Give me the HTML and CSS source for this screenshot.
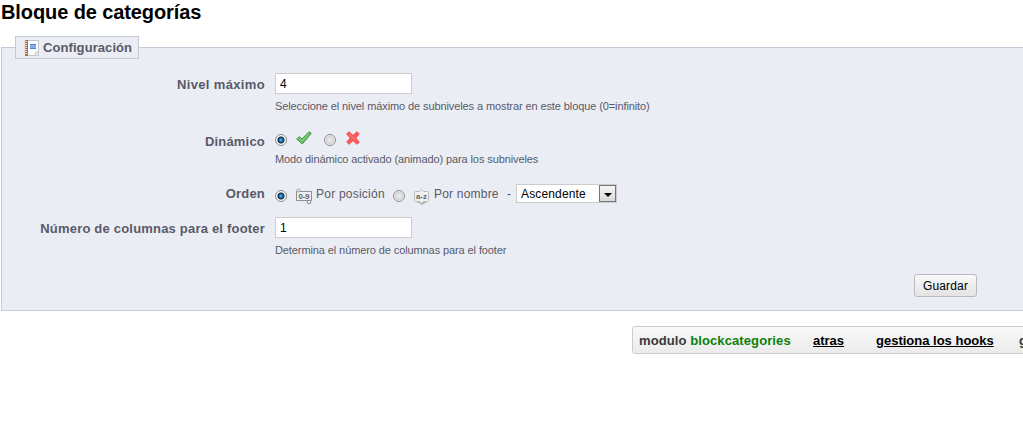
FILE: index.html
```
<!DOCTYPE html>
<html lang="es">
<head>
    <meta charset="UTF-8">
    <title>Bloque de categorías</title>
    <link rel="stylesheet" href="styles.css">
</head>
<body>
    <h2>Bloque de categorías</h2>
    <form onsubmit="return false">
        <div class="panel">
            <div class="legend">
                <svg width="16" height="16" viewBox="0 0 16 16">
                    <path d="M2.5 .5h12v11l-4 4h-8z" fill="#fbfcfd" stroke="#c3c7ce"/>
                    <path d="M10.5 15.5l1-3 3-1v4z" fill="#eceef2" stroke="#c3c7ce"/>
                    <path d="M1 0h3v16H1z" fill="#b96c3c"/>
                    <path d="M0 1.5h3M0 3.5h3M0 5.5h3M0 7.5h3M0 9.5h3M0 11.5h3M0 13.5h3" stroke="#e3d5cb"/>
                    <path d="M6 4h6v1H6zM6 8h6v1H6z" fill="#4b86d6"/>
                    <path d="M6 5h6v3H6z" fill="#83b0ec"/>
                </svg>
                <span>Configuración</span>
            </div>
            <div class="row row-level">
                <label for="level">Nivel máximo</label>
                <div class="field">
                    <input type="text" id="level" value="4">
                    <p class="hint">Seleccione el nivel máximo de subniveles a mostrar en este bloque (0=infinito)</p>
                </div>
            </div>
            <div class="row row-dynamic">
                <label>Dinámico</label>
                <div class="field">
                    <div class="options">
                        <input type="radio" name="dynamic" checked>
                        <svg class="yes" width="16" height="14" viewBox="0 0 16 14">
                            <path d="M.7 8l2.6-2.4L6 8 13 .7l2.3 1.6L6.3 13z" fill="#66c05f" stroke="#459a49" stroke-linejoin="round"/>
                            <path d="M2.7 7.5L6 10l7.3-7.8" fill="none" stroke="#8dd486"/>
                        </svg>
                        <input type="radio" name="dynamic">
                        <svg class="no" width="14" height="14" viewBox="0 0 14 14">
                            <path d="M3 .7l4 3.7L11 .7 13.3 3 9.7 7l3.6 4-2.3 2.3-4-3.7-4 3.7L.7 11l3.6-4L.7 3z" fill="#fb5a5a" stroke="#ec4a4c" stroke-linejoin="round"/>
                            <path d="M3 2.5l8 8" stroke="#ff8080"/>
                        </svg>
                    </div>
                    <p class="hint">Modo dinámico activado (animado) para los subniveles</p>
                </div>
            </div>
            <div class="row row-order">
                <label>Orden</label>
                <div class="options">
                    <input type="radio" name="order" checked>
                    <svg class="sort sort-position" width="17" height="17" viewBox="0 0 17 17">
                        <path d="M.5 3.5h15v9H.5z" fill="#efefef" stroke="#8e8e8e"/>
                        <circle cx="2.5" cy="2.5" r="1.5" fill="#f5f5f5" stroke="#999"/>
                        <circle cx="13" cy="14" r="1.8" fill="#f5f5f5" stroke="#888"/>
                        <text x="2.5" y="11" textLength="11">0-9</text>
                    </svg>
                    <span class="by-position">Por posición</span>
                    <input type="radio" name="order">
                    <svg class="sort sort-name" width="16" height="17" viewBox="0 0 16 17">
                        <path d="M3 14h10l-5 2.8z" fill="#aaa"/>
                        <path d="M1.5 3.5h4l2-2 2 2h4q1 0 1 1v8q0 1-1 1h-4l-2 2-2-2h-4q-1 0-1-1v-8q0-1 1-1z" fill="#f1f1f1" stroke="#bbb"/>
                        <text x="2" y="11" textLength="11">a-z</text>
                    </svg>
                    <span class="by-name">Por nombre</span>
                    <span class="dash">-</span>
                    <div class="select">
                        <span>Ascendente</span>
                        <div class="arrow"></div>
                    </div>
                </div>
            </div>
            <div class="row row-columns">
                <label for="columns">Número de columnas para el footer</label>
                <div class="field">
                    <input type="text" id="columns" value="1">
                    <p class="hint">Determina el número de columnas para el footer</p>
                </div>
            </div>
            <button>Guardar</button>
        </div>
    </form>
    <div class="toolbar">
        <span class="module">modulo <b>blockcategories</b></span>
        <a class="back" href="#">atras</a>
        <a class="hooks" href="#">gestiona los hooks</a>
        <span>g</span>
    </div>
</body>
</html>
```
FILE: styles.css
```
* {
    box-sizing: border-box;
}
body {
    margin: 0;
    overflow: hidden;
    background: #fff;
    color: #000;
    font-family: "Liberation Sans", Arial, sans-serif;
    font-size: 12px;
    white-space: nowrap;
}
h2 {
    margin: 0 0 0 1px;
    height: 37px;
    font-size: 20px;
    line-height: 24px;
    letter-spacing: -0.1px;
}
.panel {
    width: 1040px;
    height: 264px;
    margin: 10px 0 0 1px;
    border: 1px solid #c8c9d6;
    background: #ebedf4;
    color: #585a69;
}
.legend {
    display: flex;
    align-items: center;
    gap: 3px;
    width: 124px;
    height: 23px;
    margin: -12px 0 0 13px;
    padding-left: 8px;
    border: 1px solid #c8c9d6;
    background: #ebedf4;
    font-size: 13px;
    font-weight: bold;
    letter-spacing: 0.08px;
}
.row {
    display: grid;
    grid-template-columns: 263px 1fr;
    column-gap: 10px;
}
.row-level {
    height: 57px;
    margin-top: 14px;
}
.row-dynamic {
    height: 54px;
}
.row-order {
    height: 33px;
}
.row-columns {
    height: 57px;
}
.row label {
    padding-top: 4px;
    font-size: 13px;
    font-weight: bold;
    line-height: 15px;
    text-align: right;
    letter-spacing: 0.2px;
}
.row-level label {
    letter-spacing: 0.35px;
}
.row-order label {
    padding-top: 2px;
}
input[type=text] {
    display: block;
    width: 137px;
    height: 21px;
    padding: 0 4px;
    border: 1px solid #ccc;
    background: #fff;
    font: 12px "Liberation Sans", Arial, sans-serif;
}
.hint {
    margin: 5px 0 0;
    font-size: 11px;
    line-height: 14px;
    letter-spacing: -0.1px;
}
.options {
    display: flex;
    height: 20px;
}
.row-dynamic .hint {
    margin-top: 2px;
}
input[type=radio] {
    appearance: none;
    width: 12px;
    height: 12px;
    margin: 4px 0 0;
    border: 1px solid #8b8b8b;
    border-radius: 50%;
    background: radial-gradient(#f0f0f0 0, #d3d3d3 4px, #fff 5px);
}
input[type=radio]:checked {
    background: radial-gradient(circle at 5px 5px, #66c5ed 0, #15649b 2px, #0b2745 3px, #f8f8f8 4px);
}
.yes {
    margin: 1px 12px 0 9px;
}
.no {
    margin: 1px 0 0 10px;
}
.row-order input[type=radio] {
    margin-top: 6px;
}
.sort {
    margin-top: 4px;
}
.sort text {
    fill: #666;
    font-size: 8px;
    font-weight: bold;
}
.sort-position {
    margin-left: 9px;
}
.sort-name {
    margin-left: 9px;
}
.options span {
    line-height: 20px;
}
.by-position {
    width: 77px;
    margin-left: 3px;
    letter-spacing: 0.23px;
}
.by-name {
    width: 73px;
    margin-left: 4px;
    letter-spacing: 0.2px;
}
.dash {
    width: 9px;
}
.select {
    display: flex;
    justify-content: space-between;
    width: 101px;
    height: 19px;
    padding-left: 4px;
    border: 1px solid #ccc;
    background: #fff;
    color: #000;
}
.select span {
    line-height: 18px;
    letter-spacing: 0.15px;
}
.arrow {
    width: 17px;
    height: 17px;
    padding: 7px 0 0 4px;
    border: 1px solid #777;
    background: linear-gradient(#f6f6f6, #d9d9d9);
}
.arrow::before {
    content: "";
    display: block;
    width: 0;
    border: 4px solid transparent;
    border-top-color: #000;
    border-bottom: 0;
}
button {
    display: block;
    width: 63px;
    height: 23px;
    margin: 0 0 0 912px;
    padding: 0;
    border: 1px solid #bbb;
    border-radius: 3px;
    background: linear-gradient(#f9f9f9, #e3e3e3);
    color: #000;
    font: 12px "Liberation Sans", Arial, sans-serif;
    letter-spacing: 0.15px;
}
.toolbar {
    display: flex;
    width: 430px;
    height: 28px;
    margin: 15px 0 0 632px;
    padding-left: 6px;
    border: 1px solid #ccc;
    border-radius: 3px;
    background: linear-gradient(#f8f8f8, #ebebeb);
    color: #383838;
    font-size: 13px;
    font-weight: bold;
    line-height: 27px;
}
.toolbar b {
    color: #0b800b;
}
.toolbar a {
    color: #000;
}
.module {
    width: 174px;
    letter-spacing: 0.1px;
}
.back {
    width: 63px;
}
.hooks {
    width: 143px;
}
```
